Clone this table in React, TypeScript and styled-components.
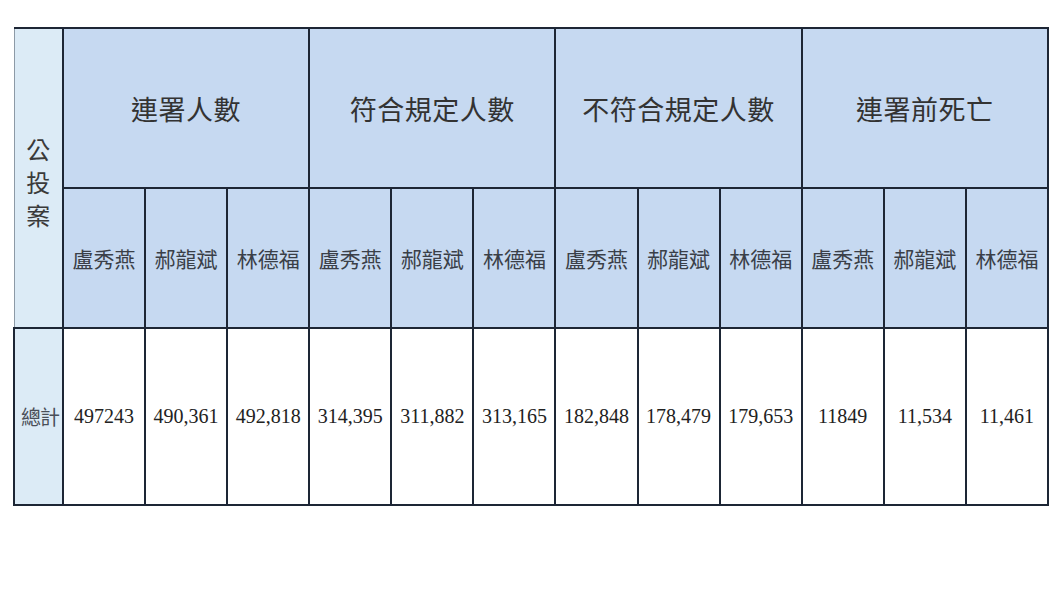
import styled, { createGlobalStyle } from "styled-components";

const GlobalStyle = createGlobalStyle`
  html, body {
    margin: 0;
    padding: 0;
    background: #ffffff;
  }
  body {
    font-family: "Noto Sans CJK TC", "Noto Sans", sans-serif;
    color: #333;
  }
`;

const Page = styled.div`
  width: 1060px;
  height: 596px;
  padding: 27px 0 0 13px;
  box-sizing: border-box;
  background: #fff;
`;

const Table = styled.table`
  border-collapse: collapse;
  table-layout: fixed;
  width: 1036px;
`;

const LINE = "2px solid #1d2635";

const SideHead = styled.th`
  width: 49px;
  background: #dcebf6;
  border: ${LINE};
  border-left: 1px solid #8d9aa6;
  padding: 0;
  font-size: 24px;
  font-weight: 400;
  line-height: 33px;
  color: #3a3a3a;
  vertical-align: middle;

  span {
    display: block;
    padding-top: 6px;
  }
`;

const GroupHead = styled.th`
  height: 158px;
  background: #c6d9f1;
  border: ${LINE};
  padding: 0;
  font-size: 27px;
  font-weight: 400;
  letter-spacing: 0.5px;
  color: #333;
`;

const NameHead = styled.th`
  height: 138px;
  background: #c6d9f1;
  border: ${LINE};
  padding: 0;
  font-size: 21px;
  font-weight: 400;
  color: #3a3f48;
  white-space: nowrap;
`;

const SideCell = styled.td`
  height: 175px;
  background: #dcebf6;
  border: ${LINE};
  padding: 0 0 0 6px;
  font-size: 20px;
  color: #4a4f58;
  white-space: nowrap;
  overflow: visible;
  letter-spacing: -1px;
`;

const NumCell = styled.td`
  border: ${LINE};
  padding: 0;
  text-align: center;
  font-family: "Liberation Serif", "Times New Roman", serif;
  font-size: 20px;
  color: #222;
  white-space: nowrap;
`;

const groups = ["連署人數", "符合規定人數", "不符合規定人數", "連署前死亡"];
const names = ["盧秀燕", "郝龍斌", "林德福"];
const totals = [
  "497243",
  "490,361",
  "492,818",
  "314,395",
  "311,882",
  "313,165",
  "182,848",
  "178,479",
  "179,653",
  "11849",
  "11,534",
  "11,461",
];

export default function App() {
  return (
    <>
      <GlobalStyle />
      <Page>
        <Table>
          <colgroup>
            <col style={{ width: 49 }} />
            {totals.map((_, i) => (
              <col key={i} />
            ))}
          </colgroup>
          <thead>
            <tr>
              <SideHead rowSpan={2}>
                <span>
                  公<br />投<br />案
                </span>
              </SideHead>
              {groups.map((g) => (
                <GroupHead key={g} colSpan={3}>
                  {g}
                </GroupHead>
              ))}
            </tr>
            <tr>
              {groups.map((g) =>
                names.map((n) => <NameHead key={g + n}>{n}</NameHead>)
              )}
            </tr>
          </thead>
          <tbody>
            <tr>
              <SideCell>總計</SideCell>
              {totals.map((t, i) => (
                <NumCell key={i}>{t}</NumCell>
              ))}
            </tr>
          </tbody>
        </Table>
      </Page>
    </>
  );
}
